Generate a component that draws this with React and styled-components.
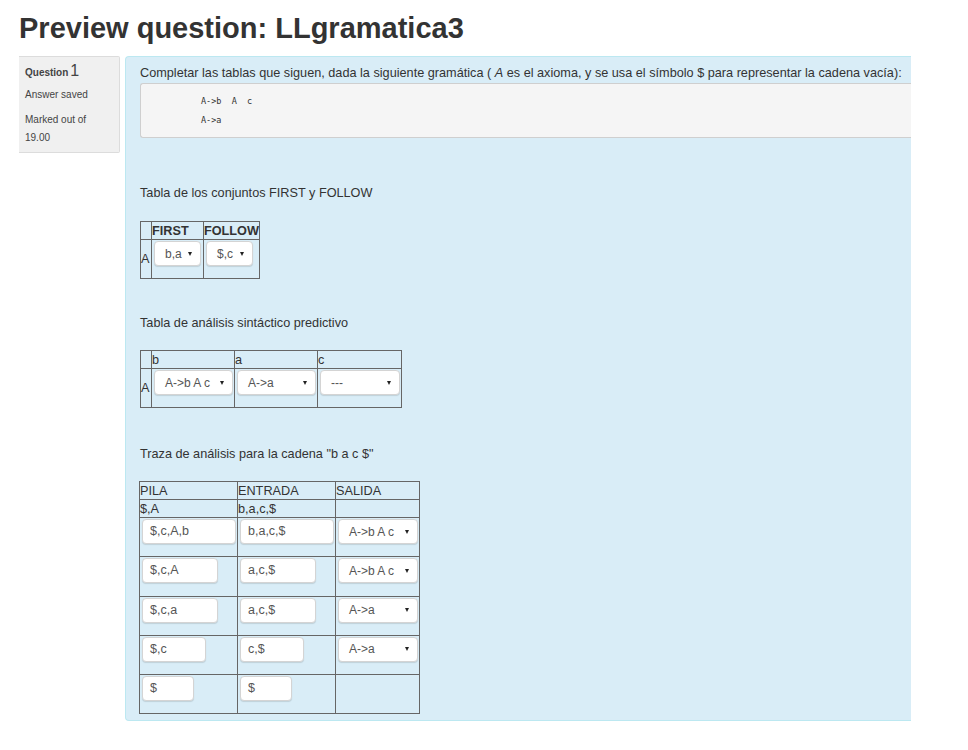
import styled, { createGlobalStyle } from "styled-components";

const GlobalStyle = createGlobalStyle`
  body {
    margin: 0;
    background: #fff;
    font-family: "Liberation Sans", Arial, sans-serif;
    color: #333;
  }
`;

const Page = styled.div`
  padding: 10px 0 30px 19px;
`;

const Title = styled.h1`
  margin: 0 0 10px 0;
  font-size: 29px;
  line-height: 36px;
  font-weight: bold;
  color: #333;
`;

const Row = styled.div`
  display: flex;
  align-items: flex-start;
  gap: 5px;
`;

const Info = styled.div`
  width: 94px;
  height: 87px;
  padding: 5px 0 3px 6px;
  background: #f0f0f0;
  border: 1px solid #dcdcdc;
  border-left: none;
  border-radius: 0 2px 2px 0;
  font-size: 10px;
  color: #444;
`;

const QNo = styled.div`
  font-weight: bold;
  font-size: 10px;
  line-height: 18px;
  span {
    font-size: 16px;
    font-weight: normal;
    margin-left: 2px;
  }
`;

const InfoLine = styled.div`
  line-height: 18px;
  margin-top: ${(p) => p.$top || 0}px;
`;

const Panel = styled.div`
  width: 771px;
  padding: 8px 0 6px 14px;
  background: #d9edf7;
  border: 1px solid #bce8f1;
  border-right: none;
  border-radius: 4px 0 0 4px;
  font-size: 12.7px;
`;

const Text = styled.div`
  line-height: 17px;
  margin-top: ${(p) => p.$top || 0}px;
  white-space: nowrap;
`;

const Code = styled.pre`
  margin: 1px 0 0 0;
  padding: 8px 0 7px 60px;
  background: #f5f5f5;
  border: 1px solid #cfcfcf;
  border-right: none;
  border-radius: 3px 0 0 3px;
  font-family: "DejaVu Sans Mono", "Liberation Mono", monospace;
  font-size: 8.5px;
  line-height: 19px;
  color: #333;
`;

const Table = styled.table`
  border-collapse: collapse;
  border: 1px solid #222;
  margin-top: ${(p) => p.$top || 0}px;
  margin-left: ${(p) => p.$left || 0}px;
  font-size: 12.7px;
  color: #333;
`;

const Th = styled.td`
  border: 1px solid #666;
  padding: 0;
  height: 17px;
  width: ${(p) => p.$w}px;
  font-weight: ${(p) => (p.$bold ? "bold" : "normal")};
  text-align: left;
  vertical-align: middle;
  line-height: 16px;
  white-space: nowrap;
`;

const Td = styled.td`
  border: 1px solid #666;
  padding: 1px 1px 0 2px;
  vertical-align: top;
  height: ${(p) => p.$h || 37}px;
  line-height: 16px;
`;

const Label = styled.td`
  border: 1px solid #666;
  padding: 0;
  width: 10px;
  vertical-align: middle;
`;

const SelectBox = styled.div`
  display: flex;
  align-items: center;
  justify-content: space-between;
  box-sizing: border-box;
  width: ${(p) => p.$w}px;
  height: 25px;
  margin-bottom: 10px;
  padding: 0 8px 0 10px;
  background: #fff;
  border: 1px solid #d4d4d4;
  border-radius: 4px;
  box-shadow: 0 1px 1px rgba(0, 0, 0, 0.12);
  color: #555;
  font-size: 12px;
  white-space: nowrap;
`;

const Arrow = styled.span`
  width: 0;
  height: 0;
  border-left: 2.5px solid transparent;
  border-right: 2.5px solid transparent;
  border-top: 4px solid #222;
`;

const Input = styled.div`
  box-sizing: border-box;
  width: ${(p) => p.$w}px;
  height: 25px;
  margin-bottom: 10px;
  padding: 0 7px;
  background: #fff;
  border: 1px solid #d4d4d4;
  border-radius: 4px;
  box-shadow: 0 1px 1px rgba(0, 0, 0, 0.12);
  color: #555;
  font-size: 12.5px;
  line-height: 23px;
`;

const Select = ({ value, w }) => (
  <SelectBox $w={w}>
    <span>{value}</span>
    <Arrow />
  </SelectBox>
);

const trace = [
  { pila: "$,c,A,b", pw: 94, entrada: "b,a,c,$", ew: 94, salida: "A->b A c" },
  { pila: "$,c,A", pw: 76, entrada: "a,c,$", ew: 76, salida: "A->b A c" },
  { pila: "$,c,a", pw: 76, entrada: "a,c,$", ew: 76, salida: "A->a" },
  { pila: "$,c", pw: 64, entrada: "c,$", ew: 64, salida: "A->a" },
  { pila: "$", pw: 52, entrada: "$", ew: 52, salida: null },
];

export default function App() {
  return (
    <Page>
      <GlobalStyle />
      <Title>Preview question: LLgramatica3</Title>
      <Row>
        <Info>
          <QNo>
            Question<span>1</span>
          </QNo>
          <InfoLine $top={4}>Answer saved</InfoLine>
          <InfoLine $top={7}>Marked out of</InfoLine>
          <InfoLine>19.00</InfoLine>
        </Info>
        <Panel>
          <Text>
            Completar las tablas que siguen, dada la siguiente gramática ( <i>A</i> es
            el axioma, y se usa el símbolo $ para representar la cadena vacía):
          </Text>
          <Code>{"A->b  A  c\nA->a"}</Code>

          <Text $top={47}>Tabla de los conjuntos FIRST y FOLLOW</Text>
          <Table $top={19}>
            <tbody>
              <tr>
                <Label />
                <Th $w={51} $bold>FIRST</Th>
                <Th $w={55} $bold>FOLLOW</Th>
              </tr>
              <tr>
                <Label>A</Label>
                <Td>
                  <Select value="b,a" w={47} />
                </Td>
                <Td>
                  <Select value="$,c" w={47} />
                </Td>
              </tr>
            </tbody>
          </Table>

          <Text $top={36}>Tabla de análisis sintáctico predictivo</Text>
          <Table $top={18}>
            <tbody>
              <tr>
                <Label />
                <Th $w={82}>b</Th>
                <Th $w={82}>a</Th>
                <Th $w={83}>c</Th>
              </tr>
              <tr>
                <Label>A</Label>
                <Td>
                  <Select value="A->b A c" w={79} />
                </Td>
                <Td>
                  <Select value="A->a" w={79} />
                </Td>
                <Td>
                  <Select value="---" w={80} />
                </Td>
              </tr>
            </tbody>
          </Table>

          <Text $top={38}>Traza de análisis para la cadena "b a c $"</Text>
          <Table $top={18} $left={-1}>
            <tbody>
              <tr>
                <Th $w={97}>PILA</Th>
                <Th $w={97}>ENTRADA</Th>
                <Th $w={83}>SALIDA</Th>
              </tr>
              <tr>
                <Th>$,A</Th>
                <Th>b,a,c,$</Th>
                <Th />
              </tr>
              {trace.map((r, i) => (
                <tr key={i}>
                  <Td $h={37.3}>
                    <Input $w={r.pw}>{r.pila}</Input>
                  </Td>
                  <Td $h={37.3}>
                    <Input $w={r.ew}>{r.entrada}</Input>
                  </Td>
                  <Td $h={37.3}>{r.salida && <Select value={r.salida} w={80} />}</Td>
                </tr>
              ))}
            </tbody>
          </Table>
        </Panel>
      </Row>
    </Page>
  );
}
